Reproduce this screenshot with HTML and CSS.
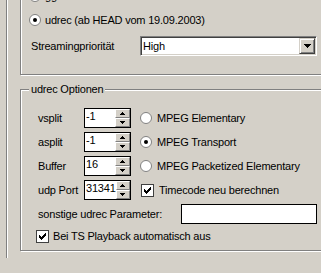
FILE: index.html
```html
<!DOCTYPE html>
<html>
<head>
    <title>udrec Optionen</title>
    <link rel="stylesheet" href="styles.css">
</head>
<body>
    <div class="frame">
        <div class="frame-inner">
            <div class="group group-mode">
                <div class="row row-clip">
                    <svg class="radio" width="12" height="12" viewBox="0 0 12 12"><circle cx="6" cy="6" r="5.5" fill="#fff" stroke="#808080"/></svg>
                    <span>ggrab</span>
                </div>
                <div class="row row-udrec">
                    <svg class="radio" width="12" height="12" viewBox="0 0 12 12"><circle cx="6" cy="6" r="5.5" fill="#fff" stroke="#808080"/><circle cx="6" cy="6" r="2" fill="#000"/></svg>
                    <span>udrec (ab HEAD vom 19.09.2003)</span>
                </div>
                <div class="row row-prio">
                    <span class="prio-label">Streamingpriorität</span>
                    <div class="combo">
                        <span class="combo-text">High</span>
                        <span class="combo-btn">
                            <svg width="7" height="4" shape-rendering="crispEdges"><rect x="0" y="0" width="7" height="1"/><rect x="1" y="1" width="5" height="1"/><rect x="2" y="2" width="3" height="1"/><rect x="3" y="3" width="1" height="1"/></svg>
                        </span>
                    </div>
                </div>
            </div>

            <div class="group group-opts">
                <span class="legend">udrec Optionen</span>

                <div class="opt-row">
                    <span class="opt-label">vsplit</span>
                    <div class="spin">
                        <span class="spin-val">-1</span>
                        <span class="spin-btns">
                            <span class="spin-btn"><svg width="5" height="3" shape-rendering="crispEdges"><rect x="2" y="0" width="1" height="1"/><rect x="1" y="1" width="3" height="1"/><rect x="0" y="2" width="5" height="1"/></svg></span>
                            <span class="spin-btn"><svg width="5" height="3" shape-rendering="crispEdges"><rect x="0" y="0" width="5" height="1"/><rect x="1" y="1" width="3" height="1"/><rect x="2" y="2" width="1" height="1"/></svg></span>
                        </span>
                    </div>
                    <div class="choice">
                        <svg class="radio" width="12" height="12" viewBox="0 0 12 12"><circle cx="6" cy="6" r="5.5" fill="#fff" stroke="#808080"/></svg>
                        <span>MPEG Elementary</span>
                    </div>
                </div>

                <div class="opt-row">
                    <span class="opt-label">asplit</span>
                    <div class="spin">
                        <span class="spin-val">-1</span>
                        <span class="spin-btns">
                            <span class="spin-btn"><svg width="5" height="3" shape-rendering="crispEdges"><rect x="2" y="0" width="1" height="1"/><rect x="1" y="1" width="3" height="1"/><rect x="0" y="2" width="5" height="1"/></svg></span>
                            <span class="spin-btn"><svg width="5" height="3" shape-rendering="crispEdges"><rect x="0" y="0" width="5" height="1"/><rect x="1" y="1" width="3" height="1"/><rect x="2" y="2" width="1" height="1"/></svg></span>
                        </span>
                    </div>
                    <div class="choice">
                        <svg class="radio" width="12" height="12" viewBox="0 0 12 12"><circle cx="6" cy="6" r="5.5" fill="#fff" stroke="#808080"/><circle cx="6" cy="6" r="2" fill="#000"/></svg>
                        <span>MPEG Transport</span>
                    </div>
                </div>

                <div class="opt-row">
                    <span class="opt-label">Buffer</span>
                    <div class="spin">
                        <span class="spin-val">16</span>
                        <span class="spin-btns">
                            <span class="spin-btn"><svg width="5" height="3" shape-rendering="crispEdges"><rect x="2" y="0" width="1" height="1"/><rect x="1" y="1" width="3" height="1"/><rect x="0" y="2" width="5" height="1"/></svg></span>
                            <span class="spin-btn"><svg width="5" height="3" shape-rendering="crispEdges"><rect x="0" y="0" width="5" height="1"/><rect x="1" y="1" width="3" height="1"/><rect x="2" y="2" width="1" height="1"/></svg></span>
                        </span>
                    </div>
                    <div class="choice">
                        <svg class="radio" width="12" height="12" viewBox="0 0 12 12"><circle cx="6" cy="6" r="5.5" fill="#fff" stroke="#808080"/></svg>
                        <span>MPEG Packetized Elementary</span>
                    </div>
                </div>

                <div class="opt-row">
                    <span class="opt-label">udp Port</span>
                    <div class="spin">
                        <span class="spin-val">31341</span>
                        <span class="spin-btns">
                            <span class="spin-btn"><svg width="5" height="3" shape-rendering="crispEdges"><rect x="2" y="0" width="1" height="1"/><rect x="1" y="1" width="3" height="1"/><rect x="0" y="2" width="5" height="1"/></svg></span>
                            <span class="spin-btn"><svg width="5" height="3" shape-rendering="crispEdges"><rect x="0" y="0" width="5" height="1"/><rect x="1" y="1" width="3" height="1"/><rect x="2" y="2" width="1" height="1"/></svg></span>
                        </span>
                    </div>
                    <div class="choice">
                        <span class="check">
                            <svg width="7" height="7" shape-rendering="crispEdges"><rect x="0" y="2" width="1" height="3"/><rect x="1" y="3" width="1" height="3"/><rect x="2" y="4" width="1" height="3"/><rect x="3" y="3" width="1" height="3"/><rect x="4" y="2" width="1" height="3"/><rect x="5" y="1" width="1" height="3"/><rect x="6" y="0" width="1" height="3"/></svg>
                        </span>
                        <span>Timecode neu berechnen</span>
                    </div>
                </div>

                <div class="opt-row">
                    <span class="param-label">sonstige udrec Parameter:</span>
                    <span class="edit"></span>
                </div>

                <div class="opt-row row-playback">
                    <span class="check">
                        <svg width="7" height="7" shape-rendering="crispEdges"><rect x="0" y="2" width="1" height="3"/><rect x="1" y="3" width="1" height="3"/><rect x="2" y="4" width="1" height="3"/><rect x="3" y="3" width="1" height="3"/><rect x="4" y="2" width="1" height="3"/><rect x="5" y="1" width="1" height="3"/><rect x="6" y="0" width="1" height="3"/></svg>
                    </span>
                    <span>Bei TS Playback automatisch aus</span>
                </div>
            </div>
        </div>
    </div>
</body>
</html>
```

FILE: styles.css
```css
body { margin: 0; height: 273px; overflow: hidden; background: #d4d0c8; color: #000; font: 11px/13px "Liberation Sans", Arial, sans-serif; letter-spacing: -0.2px; }
.frame { margin-left: 6px; height: 100%; border-left: 1px solid #808080; }
.frame-inner { height: 100%; padding-left: 12px; border-left: 1px solid #fff; }

.group { position: relative; width: 320px; border: 1px solid #808080; box-shadow: inset 1px 1px 0 #fff, 1px 1px 0 #fff; }
.group-mode { margin-top: -15px; padding: 0 0 18px 8px; }
.group-opts { margin-top: 14px; padding: 18px 0 6px 17px; display: flex; flex-direction: column; gap: 4px; }
.legend { position: absolute; top: -7px; left: 8px; padding: 0 2px; background: #d4d0c8; }

.row { display: flex; align-items: center; gap: 4px; height: 20px; }
.row-udrec { margin-top: 4px; }
.row-prio { margin-top: 6px; padding-left: 2px; gap: 0; }
.prio-label { width: 109px; }
.radio { flex: none; display: block; }

.combo { width: 177px; height: 20px; box-sizing: border-box; display: flex; align-items: center; background: #fff; border: 1px solid; border-color: #808080 #fff #fff #808080; box-shadow: inset 1px 1px 0 #404040, inset -1px -1px 0 #d4d0c8; padding: 1px 1px 1px 2px; }
.combo-text { flex: 1; }
.combo-btn { width: 16px; height: 16px; box-sizing: border-box; display: flex; align-items: center; justify-content: center; background: #d4d0c8; border: 1px solid; border-color: #d4d0c8 #404040 #404040 #d4d0c8; box-shadow: inset 1px 1px 0 #fff, inset -1px -1px 0 #808080; }
.combo-btn svg, .spin-btn svg, .check svg { display: block; }

.opt-row { display: flex; align-items: center; height: 20px; }
.opt-label { width: 46px; }
.spin { width: 47px; height: 20px; box-sizing: border-box; display: flex; border: 1px solid #000; background: #fff; margin-right: 9px; }
.spin-val { flex: 1; padding: 1px 0 0 1px; line-height: 13px; }
.spin-btns { width: 15px; display: flex; flex-direction: column; }
.spin-btn { height: 9px; box-sizing: border-box; display: flex; align-items: center; justify-content: center; background: #d4d0c8; border: 1px solid; border-color: #fff #808080 #808080 #fff; }

.choice { display: flex; align-items: center; gap: 5px; }
.check { width: 13px; height: 13px; box-sizing: border-box; flex: none; display: flex; align-items: center; justify-content: center; background: #fff; border: 1px solid #404040; }
.choice .check { margin-left: 1px; }

.param-label { width: 143px; }
.edit { width: 136px; height: 20px; box-sizing: border-box; background: #fff; border: 1px solid #000; }
.row-playback { margin-left: -2px; gap: 4px; height: 16px; }
```
